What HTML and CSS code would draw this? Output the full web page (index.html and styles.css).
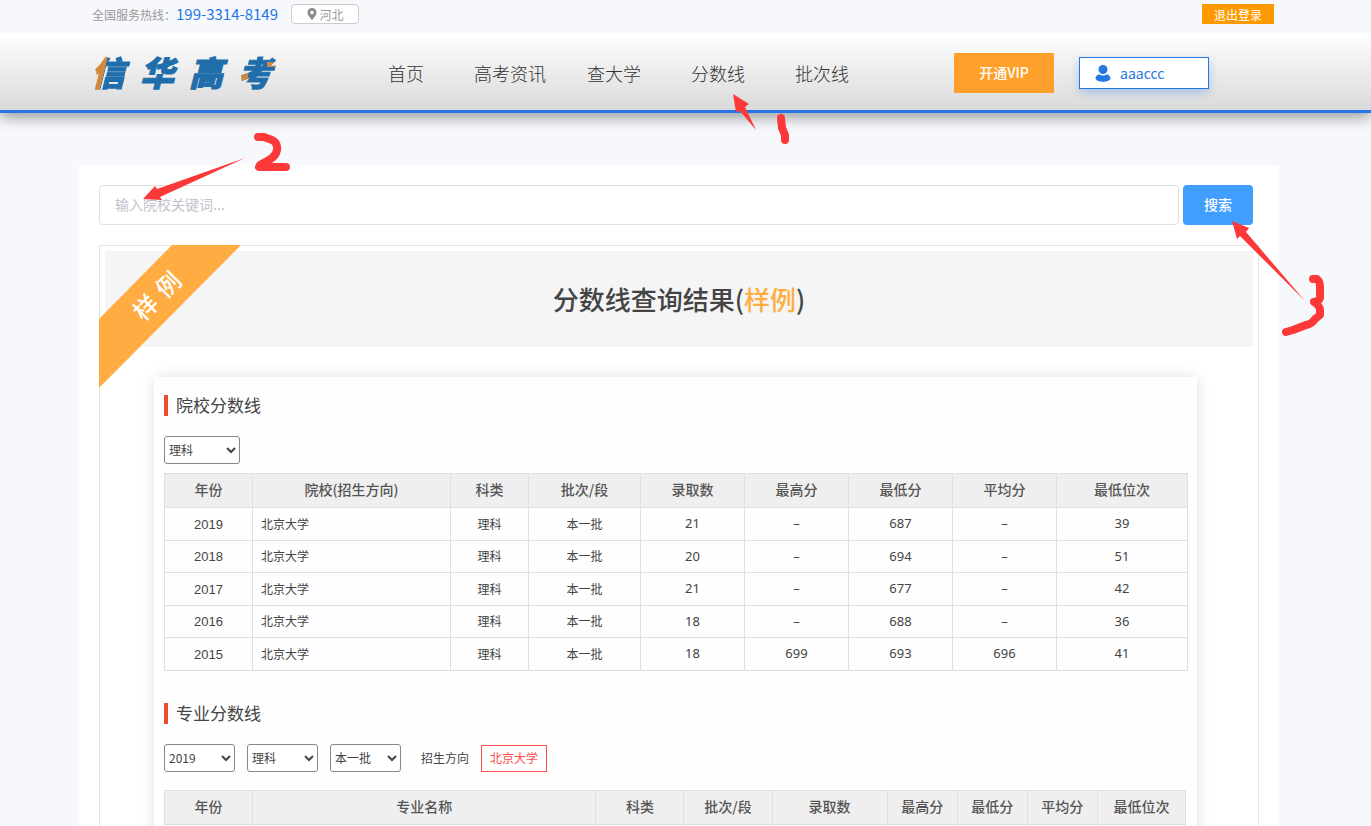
FILE: index.html
```html
<!DOCTYPE html>
<html lang="zh-CN">
<head>
  <meta charset="UTF-8">
  <meta name="viewport" content="width=device-width, initial-scale=1.0">
  <title>分数线</title>
  <link rel="stylesheet" href="styles.css">
</head>
<body>
  <div class="page">
    <div class="topbar">
      <div class="container topbar-inner">
        <span>全国服务热线：</span>
        <a class="phone" href="tel:199-3314-8149">199-3314-8149</a>
        <button class="region" type="button">
          <svg width="10" height="12" viewBox="0 0 10 12"><path fill="#8a8a8a" fill-rule="evenodd" d="M5 0C2.3 0 .4 2 .4 4.5.4 7.200 3 9.500 5 12c2-2.500 4.600-4.800 4.600-7.500C9.600 2 7.700 0 5 0zm0 2.800a1.800 1.800 0 1 1 0 3.600 1.800 1.800 0 0 1 0-3.600z"/></svg>
          河北
        </button>
        <button class="logout" type="button">退出登录</button>
      </div>
    </div>

    <header class="header">
      <div class="container header-inner">
        <a class="logo" href="#"><span class="logo-first">信</span><span>华</span><span>高</span><span class="logo-last">考</span></a>
        <nav class="nav">
          <a href="#">首页</a>
          <a href="#">高考资讯</a>
          <a href="#">查大学</a>
          <a href="#">分数线</a>
          <a href="#">批次线</a>
        </nav>
        <button class="vip" type="button">开通VIP</button>
        <a class="user" href="#">
          <svg width="16" height="17" viewBox="0 0 16 17"><circle cx="8" cy="4.500" r="4.500" fill="#2577e3"/><path fill="#2577e3" d="M4 9.200Q8 12 12 9.200C14.500 10 15.500 12 15.500 13.500 14 17.800 2 17.800.5 13.500 .5 12 1.500 10 4 9.200z"/></svg>
          aaaccc
        </a>
      </div>
    </header>

    <main class="container panel">
      <form class="search">
        <input type="text" aria-label="院校关键词" placeholder="输入院校关键词...">
        <button type="submit">搜索</button>
      </form>

      <section class="result">
        <svg class="ribbon" width="143" height="144" viewBox="0 0 143 144">
          <polygon points="73,0 142,0 0,143 0,74" fill="#ffad42"/>
          <g transform="translate(58 51) rotate(-45)" fill="#fff" font-size="24" font-weight="500" text-anchor="middle">
            <text x="-16" y="9">样</text>
            <text x="16" y="9">例</text>
          </g>
        </svg>
        <h1>分数线查询结果(<em>样例</em>)</h1>

        <div class="sheet">
          <h2>院校分数线</h2>
          <div class="filters">
            <select class="wide" aria-label="科类"><option>理科</option></select>
          </div>
          <table class="school-table">
            <colgroup>
              <col class="w88"><col class="w198"><col class="w78"><col class="w112">
              <col class="w104"><col class="w104"><col class="w104"><col class="w104"><col class="w131">
            </colgroup>
            <thead>
              <tr><th>年份</th><th>院校(招生方向)</th><th>科类</th><th>批次/段</th><th>录取数</th><th>最高分</th><th>最低分</th><th>平均分</th><th>最低位次</th></tr>
            </thead>
            <tbody>
              <tr><td>2019</td><td>北京大学</td><td>理科</td><td>本一批</td><td>21</td><td>–</td><td>687</td><td>–</td><td>39</td></tr>
              <tr><td>2018</td><td>北京大学</td><td>理科</td><td>本一批</td><td>20</td><td>–</td><td>694</td><td>–</td><td>51</td></tr>
              <tr><td>2017</td><td>北京大学</td><td>理科</td><td>本一批</td><td>21</td><td>–</td><td>677</td><td>–</td><td>42</td></tr>
              <tr><td>2016</td><td>北京大学</td><td>理科</td><td>本一批</td><td>18</td><td>–</td><td>688</td><td>–</td><td>36</td></tr>
              <tr><td>2015</td><td>北京大学</td><td>理科</td><td>本一批</td><td>18</td><td>699</td><td>693</td><td>696</td><td>41</td></tr>
            </tbody>
          </table>

          <h2>专业分数线</h2>
          <div class="filters">
            <select aria-label="年份"><option>2019</option></select>
            <select aria-label="科类"><option>理科</option></select>
            <select aria-label="批次"><option>本一批</option></select>
            <span class="filter-label">招生方向</span>
            <button class="direction" type="button">北京大学</button>
          </div>
          <table class="major-table">
            <colgroup>
              <col class="w88"><col class="w343"><col class="w88"><col class="w88">
              <col class="w115"><col class="w70"><col class="w70"><col class="w70"><col class="w88">
            </colgroup>
            <thead>
              <tr><th>年份</th><th>专业名称</th><th>科类</th><th>批次/段</th><th>录取数</th><th>最高分</th><th>最低分</th><th>平均分</th><th>最低位次</th></tr>
            </thead>
            <tbody>
              <tr><td></td><td></td><td></td><td></td><td></td><td></td><td></td><td></td><td></td></tr>
            </tbody>
          </table>
        </div>
      </section>
    </main>

    <!-- step markers 1, 2, 3 -->
    <svg class="marks" width="1371" height="400" viewBox="0 0 1371 400">
      <g fill="#fc3838">
        <polygon points="733,94 749,104 745,107 756,130 740,111 736,112"/>
        <polygon points="143,199 155,186 157,189 245,158 160,197 162,200"/>
        <polygon points="1232,221 1249,228 1246,232 1305,301 1240,236 1237,239"/>
      </g>
      <g fill="none" stroke="#fc3838" stroke-width="8" stroke-linecap="round" stroke-linejoin="round">
        <path d="M781 118L782 128 785 135V140"/>
        <path d="M258 137H264L272 140Q278 143 277 150 276 156 269 160L260 165 259 167 272 167H286"/>
        <path d="M1313 279H1317Q1320 281 1320 287V298Q1319 301 1314 302 1320 306 1320 310V315L1315 319Q1312 324 1306 325L1293 330 1286 332"/>
      </g>
    </svg>
  </div>
</body>
</html>
```
FILE: styles.css
```css
* {
  box-sizing: border-box;
}
body {
  margin: 0;
  background-color: #f6f8fc;
  color: #444;
  font-family: "Noto Sans CJK SC", sans-serif;
  font-size: 12px;
}
button, input, select {
  font-family: inherit;
}
button {
  cursor: pointer;
}
a {
  text-decoration: none;
}
.page {
  position: relative;
  height: 100vh;
  overflow: hidden;
}
.topbar, .header {
  padding-right: 13px;
}
.topbar {
  position: relative;
  z-index: 1;
  background-color: #f6f8fc;
}
.container {
  max-width: 1200px;
  margin: 0 auto;
}

/* top bar */
.topbar-inner {
  display: flex;
  align-items: center;
  height: 33px;
  padding: 0 5px 5px 13px;
  color: #999;
}
.phone {
  padding-bottom: 2px;
  color: #2577e3;
  font-size: 15px;
}
.region {
  display: flex;
  align-items: center;
  justify-content: center;
  gap: 3px;
  width: 68px;
  height: 20px;
  margin-left: 13px;
  padding: 0;
  border: 1px solid #ccc;
  border-radius: 4px;
  background-color: #fff;
  color: #999;
  font-size: 12px;
}
.logout {
  width: 72px;
  height: 20px;
  margin-left: auto;
  padding: 0;
  border: none;
  background-color: #ff9900;
  color: #fff;
  font-size: 12px;
}

/* header */
.header {
  position: relative;
  border-bottom: 3px solid #2577e3;
  background: linear-gradient(#fff, #dadada);
  box-shadow: 0 4px 14px rgba(0, 0, 0, 0.4);
}
.header-inner {
  display: flex;
  align-items: center;
  height: 77px;
  padding: 2px 0 0 12px;
}
.logo {
  display: flex;
  gap: 15px;
  width: 263px;
  padding-bottom: 2px;
  color: #1f6eab;
  font-size: 34px;
  font-style: italic;
  font-weight: 900;
  line-height: 44px;
  -webkit-text-stroke: 1px #1f6eab;
}
.logo-first, .logo-last {
  margin-right: -8px;
  padding-right: 8px;
  color: transparent;
  -webkit-text-stroke: 1px transparent;
}
.logo-first {
  background: linear-gradient(104deg, #d3873b 35%, #1f6eab 35%);
  background-clip: text;
}
.logo-last {
  background:
    linear-gradient(#d3873b, #d3873b) 0 22px / 10px 10px no-repeat,
    linear-gradient(#d3873b, #d3873b) 29px 12px / 9px 5px no-repeat,
    #1f6eab;
  background-clip: text;
}
.nav {
  display: flex;
}
.nav a {
  width: 104px;
  color: #333;
  font-size: 18px;
  font-weight: 300;
  text-align: center;
}
.vip {
  width: 100px;
  height: 40px;
  margin-left: 80px;
  padding-bottom: 3px;
  border: none;
  background-color: #ffa02c;
  color: #fff;
  font-size: 14px;
  font-weight: 500;
}
.user {
  display: flex;
  align-items: center;
  gap: 9px;
  width: 130px;
  height: 32px;
  margin-left: 25px;
  padding-left: 15px;
  border: 1px solid #2577e3;
  background-color: #fff;
  box-shadow: 0 4px 10px rgba(37, 119, 227, 0.3);
  color: #2577e3;
  font-size: 14px;
}
.user svg {
  margin-top: 2px;
}

/* search */
main.panel {
  position: relative;
  width: 1200px;
  max-width: calc(100% - 13px);
  margin-top: 52px;
  margin-left: max(0px, calc((100% - 1213px) / 2));
  padding: 20px 20px 0;
  background-color: #fff;
}
.search {
  display: flex;
  gap: 4px;
  margin: 0 6px 20px 0;
}
.search input {
  flex: 1;
  height: 40px;
  padding: 0 15px 2px;
  border: 1px solid #dcdfe6;
  border-radius: 4px;
  font-size: 14px;
}
.search input::placeholder {
  color: #bfc3cb;
}
.search button {
  width: 70px;
  padding-bottom: 3px;
  border: none;
  border-radius: 4px;
  background-color: #409eff;
  color: #fff;
  font-size: 14px;
  font-weight: 500;
}

/* result */
.result {
  position: relative;
  padding: 5px 5px 0;
  border: 1px solid #e6e6e6;
  border-bottom: none;
}
.ribbon {
  position: absolute;
  top: -1px;
  left: -1px;
}
h1 {
  margin: 0 0 30px;
  background-color: #f5f5f5;
  font-size: 26px;
  font-weight: 500;
  line-height: 96px;
  text-align: center;
}
h1 em {
  color: #ffad42;
  font-style: normal;
}
.sheet {
  margin: 0 56px 0 49px;
  padding: 18px 11px 0 10px;
  background-color: #fefefe;
  box-shadow: 0 0 14px rgba(0, 0, 0, 0.12);
}
h2 {
  margin: 0 0 20px;
  padding-left: 8px;
  border-left: 4px solid #ea4b32;
  font-size: 17px;
  font-weight: 400;
  line-height: 20px;
  padding-bottom: 1px;
}
.filters {
  display: flex;
  align-items: center;
  gap: 12px;
  height: 28px;
}
select {
  width: 71px;
  height: 28px;
  padding-bottom: 2px;
  border: 1px solid #888;
  border-radius: 3px;
  background-color: #fff;
  color: #444;
  font-size: 12px;
}
select.wide {
  width: 76px;
}
.filter-label {
  margin-left: 8px;
  padding-bottom: 2px;
}
.direction {
  width: 66px;
  height: 27px;
  padding: 0 0 2px;
  border: 1px solid #fb4d4d;
  background-color: #fff;
  color: #fb4d4d;
  font-size: 12px;
}
table {
  width: 100%;
  border-collapse: collapse;
  table-layout: fixed;
}
.school-table {
  margin: 9px 0 32px;
}
.major-table {
  margin-top: 18px;
}
th, td {
  padding: 0 0 2px;
  border: 1px solid #e0e0e0;
  text-align: center;
}
th {
  height: 34px;
  padding-bottom: 3px;
  background-color: #efefef;
  color: #555;
  font-size: 14px;
  font-weight: 500;
}
td {
  height: 32px;
}
tr:nth-child(odd) td {
  height: 33px;
}
td:nth-child(1) {
  padding-bottom: 0;
  font-family: "Liberation Sans", sans-serif;
  font-size: 13px;
}
td:nth-child(2) {
  padding-left: 8px;
  text-align: left;
}
td:nth-child(n+5) {
  font-family: "Noto Sans", sans-serif;
  font-size: 13px;
}
.w70 { width: 70px; }
.w78 { width: 78px; }
.w88 { width: 88px; }
.w104 { width: 104px; }
.w112 { width: 112px; }
.w115 { width: 115px; }
.w131 { width: 131px; }
.w198 { width: 198px; }
.w343 { width: 343px; }

.marks {
  position: absolute;
  top: 0;
  left: 0;
  z-index: 2;
  pointer-events: none;
}
```
